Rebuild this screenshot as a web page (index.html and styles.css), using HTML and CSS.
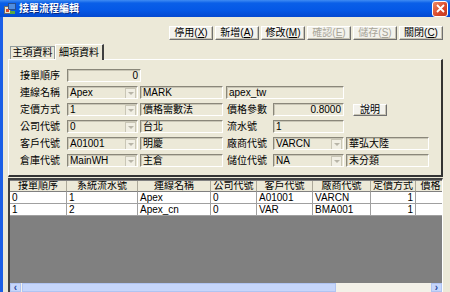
FILE: index.html
```html
<!DOCTYPE html>
<html lang="zh-Hant">
<head>
    <meta charset="UTF-8">
    <title>接單流程編輯</title>
    <link rel="stylesheet" href="styles.css">
</head>
<body>
    <div class="window">
        <div class="titlebar">
            <svg class="app-icon" width="12" height="12" viewBox="0 0 12 12">
                <rect x="0.5" y="3.5" width="6" height="7" fill="#e8e4d0" stroke="#6b6b6b"/>
                <rect x="4.5" y="0.5" width="7" height="6" fill="#4f8de0" stroke="#2a4f90"/>
                <rect x="2" y="6" width="3" height="3" fill="#d84a2a"/>
                <rect x="6" y="8" width="5" height="3" fill="#5aa842"/>
            </svg>
            <span class="title">接單流程編輯</span>
            <span class="close">
                <svg width="9" height="9" viewBox="0 0 9 9"><path d="M1 1L8 8M8 1L1 8" stroke="#fff" stroke-width="1.8"/></svg>
            </span>
        </div>
        <div class="client">
            <div class="toolbar">
                <button class="btn">停用(<u>X</u>)</button>
                <button class="btn">新增(<u>A</u>)</button>
                <button class="btn">修改(<u>M</u>)</button>
                <button class="btn disabled">確認(<u>E</u>)</button>
                <button class="btn disabled">儲存(<u>S</u>)</button>
                <button class="btn">關閉(<u>C</u>)</button>
            </div>

            <div class="tabs">
                <div class="tab">主項資料</div>
                <div class="tab active">細項資料</div>
            </div>

            <div class="panel">
                <div class="row">
                    <span class="label">接單順序</span>
                    <span class="field w-first num">0</span>
                </div>
                <div class="row">
                    <span class="label">連線名稱</span>
                    <span class="combo w-combo">Apex<i class="drop"></i></span>
                    <span class="field w-name">MARK</span>
                    <span class="field w-wide">apex_tw</span>
                </div>
                <div class="row">
                    <span class="label">定價方式</span>
                    <span class="combo w-combo">1<i class="drop"></i></span>
                    <span class="field w-name">價格需數法</span>
                    <span class="label label-2">價格參數</span>
                    <span class="field w-combo num">0.8000</span>
                    <button class="btn small">說明</button>
                </div>
                <div class="row">
                    <span class="label">公司代號</span>
                    <span class="combo w-combo">0<i class="drop"></i></span>
                    <span class="field w-name">台北</span>
                    <span class="label label-2">流水號</span>
                    <span class="field w-combo">1</span>
                </div>
                <div class="row">
                    <span class="label">客戶代號</span>
                    <span class="combo w-combo">A01001<i class="drop"></i></span>
                    <span class="field w-name">明慶</span>
                    <span class="label label-2">廠商代號</span>
                    <span class="combo w-combo">VARCN<i class="drop"></i></span>
                    <span class="field w-name">華弘大陸</span>
                </div>
                <div class="row">
                    <span class="label">倉庫代號</span>
                    <span class="combo w-combo">MainWH<i class="drop"></i></span>
                    <span class="field w-name">主倉</span>
                    <span class="label label-2">儲位代號</span>
                    <span class="combo w-combo">NA<i class="drop"></i></span>
                    <span class="field w-name">未分類</span>
                </div>
            </div>

            <div class="grid">
                <div class="grid-row head">
                    <span class="c1">接單順序</span>
                    <span class="c2">系統流水號</span>
                    <span class="c3">連線名稱</span>
                    <span class="c4">公司代號</span>
                    <span class="c5">客戶代號</span>
                    <span class="c6">廠商代號</span>
                    <span class="c7">定價方式</span>
                    <span class="c8">價格</span>
                </div>
                <div class="grid-row">
                    <span class="c1">0</span>
                    <span class="c2">1</span>
                    <span class="c3">Apex</span>
                    <span class="c4">0</span>
                    <span class="c5">A01001</span>
                    <span class="c6">VARCN</span>
                    <span class="c7 num">1</span>
                    <span class="c8"></span>
                </div>
                <div class="grid-row">
                    <span class="c1">1</span>
                    <span class="c2">2</span>
                    <span class="c3">Apex_cn</span>
                    <span class="c4">0</span>
                    <span class="c5">VAR</span>
                    <span class="c6">BMA001</span>
                    <span class="c7 num">1</span>
                    <span class="c8"></span>
                </div>
                <div class="grid-empty"></div>
                <div class="hscroll">
                    <span class="arrow">&#8249;</span>
                    <span class="thumb"></span>
                    <span class="track"></span>
                    <span class="arrow">&#8250;</span>
                </div>
            </div>
        </div>
    </div>
</body>
</html>
```

FILE: styles.css
```css
body {
    margin: 0;
    font-family: "Liberation Sans", "Noto Sans CJK TC", sans-serif;
    font-size: 10px;
    color: #000;
    background: #ece9d8;
}
.window {
    width: 450px;
    height: 292px;
    overflow: hidden;
    display: flex;
    flex-direction: column;
}
.titlebar {
    height: 17px;
    flex: none;
    display: flex;
    align-items: center;
    padding: 0 2px 0 4px;
    background: linear-gradient(to bottom, #3f8cf3 0%, #0a5fe8 18%, #0558e6 60%, #0449d0 100%);
}
.app-icon {
    flex: none;
    margin-right: 3px;
}
.title {
    color: #fff;
    font-weight: bold;
    font-size: 10px;
    line-height: 17px;
    flex: 1;
    text-shadow: 1px 1px 0 #0a2a80;
}
.close {
    width: 14px;
    height: 14px;
    border: 1px solid #fff;
    border-radius: 3px;
    background: linear-gradient(135deg, #ef8a63, #d8472a 60%, #c23a1e);
    display: flex;
    align-items: center;
    justify-content: center;
}
.client {
    flex: 1;
    display: flex;
    flex-direction: column;
    border-left: 3px solid #1c5fe6;
    padding: 0 7px 0 5px;
}
.toolbar {
    display: flex;
    justify-content: flex-end;
    gap: 2px;
    margin-top: 9px;
}
.btn {
    font: inherit;
    width: 44px;
    height: 14px;
    padding: 0;
    line-height: 12px;
    white-space: nowrap;
    background: #f3f2ec;
    border: 1px solid;
    border-color: #fff #6f6f6f #6f6f6f #fff;
    box-shadow: inset -1px -1px 0 #c8c4b4;
    color: #000;
}
.btn.disabled {
    color: #a8a598;
}
.btn.small {
    width: 34px;
    height: 12px;
    line-height: 10px;
    margin-left: 7px;
}
.tabs {
    display: flex;
    align-items: flex-end;
    margin-top: 3px;
    padding-left: 2px;
    height: 16px;
}
.tab {
    height: 12px;
    line-height: 12px;
    width: 43px;
    text-align: center;
    white-space: nowrap;
    border: 1px solid #919b9c;
    border-bottom: none;
    background: #ece9d8;
}
.tab.active {
    height: 15px;
    line-height: 15px;
    width: 46px;
    margin-bottom: -1px;
    border-color: #fff #404040 #ece9d8 #fff;
    border-width: 1px 2px 0 1px;
    border-style: solid;
    position: relative;
    z-index: 1;
}
.panel {
    border: 1px solid;
    border-color: #fff #333 #333 #fff;
    border-width: 1px 2px 2px 1px;
    padding: 9px 0 8px 11px;
    display: flex;
    flex-direction: column;
    gap: 4px;
}
.row {
    display: flex;
    align-items: center;
    height: 13px;
}
.label {
    width: 47px;
    flex: none;
    line-height: 13px;
    white-space: nowrap;
}
.label-2 {
    width: 46px;
    margin-left: 4px;
}
.field, .combo {
    box-sizing: border-box;
    height: 13px;
    line-height: 11px;
    padding: 0 2px;
    border: 1px solid;
    border-color: #8a877a #fff #fff #8a877a;
    box-shadow: inset 1px 1px 0 #c9c6b6;
    background: #ece9d8;
    white-space: nowrap;
    overflow: hidden;
    flex: none;
}
.combo {
    position: relative;
    padding-right: 12px;
}
.drop {
    position: absolute;
    right: 1px;
    top: 1px;
    width: 9px;
    height: 9px;
    background: #f1efe4;
    border: 1px solid #c9c6b6;
}
.drop::after {
    content: "";
    position: absolute;
    left: 2px;
    top: 3px;
    border-left: 3px solid transparent;
    border-right: 3px solid transparent;
    border-top: 3px solid #b8b5a8;
}
.num {
    text-align: right;
}
.w-first { width: 74px; }
.w-combo { width: 71px; margin-right: 2px; }
.w-name { width: 83px; }
.w-wide { width: 118px; margin-left: 3px; }
.grid {
    margin-top: 1px;
    flex: 1;
    display: flex;
    flex-direction: column;
    border: 1px solid;
    border-color: #404040 #fff #fff #404040;
    border-width: 2px 1px 0 2px;
    background: #808080;
    overflow: hidden;
}
.grid-row {
    display: flex;
    height: 12px;
    line-height: 11px;
    background: #fff;
    flex: none;
}
.grid-row span {
    box-sizing: border-box;
    border-right: 1px solid #a0a0a0;
    border-bottom: 1px solid #a0a0a0;
    padding: 0 2px;
    white-space: nowrap;
    overflow: hidden;
    flex: none;
}
.grid-row.head {
    height: 11px;
    margin-top: 1px;
    background: #ece9d8;
}
.grid-row.head span {
    text-align: center;
    border-right: 1px solid #aca899;
    border-bottom: 1px solid #808080;
    line-height: 10px;
}
.c1 { width: 57px; }
.c2 { width: 71px; }
.c3 { width: 73px; }
.c4 { width: 46px; }
.c5 { width: 56px; }
.c6 { width: 58px; }
.c7 { width: 45px; }
.c8 { width: 30px; }
.grid-empty {
    flex: 1;
}
.hscroll {
    height: 9px;
    flex: none;
    display: flex;
    background: #f3f1e8;
}
.hscroll .arrow {
    width: 11px;
    flex: none;
    background: #c6d6fb;
    border: 1px solid #b0c4f2;
    box-sizing: border-box;
    color: #2b4a9c;
    font-size: 10px;
    line-height: 7px;
    text-align: center;
    font-weight: bold;
}
.hscroll .thumb {
    width: 314px;
    flex: none;
    margin-left: 1px;
    background: #c6d6fb;
    border: 1px solid #b0c4f2;
    box-sizing: border-box;
}
.hscroll .track {
    flex: 1;
}
```
